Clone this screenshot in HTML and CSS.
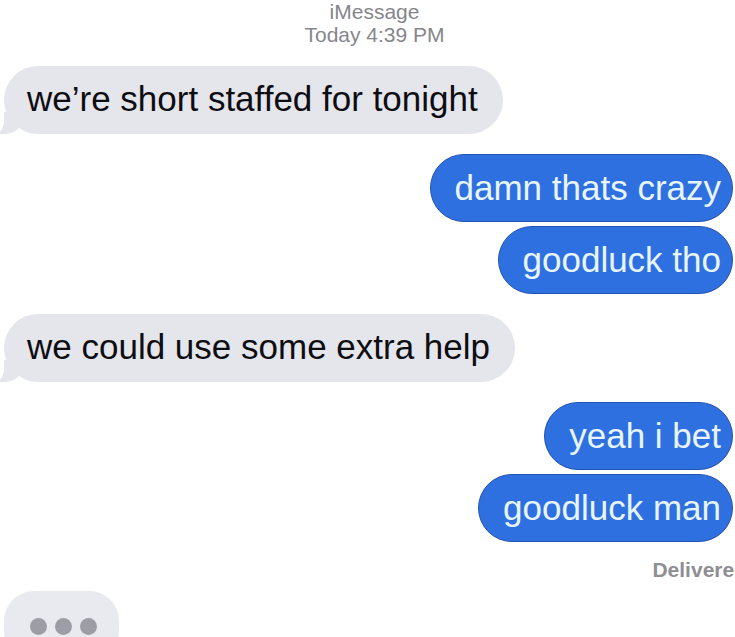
FILE: index.html
```html
<!DOCTYPE html>
<html>
<head>
<meta charset="utf-8">
<link rel="stylesheet" href="styles.css">
</head>
<body>
<div class="thread">
  <div class="header">
    <div class="service">iMessage</div>
    <div class="time">Today 4:39 PM</div>
  </div>
  <div class="row in first"><div class="bubble gray tail">we’re short staffed for tonight</div></div>
  <div class="row out group"><div class="bubble blue">damn thats crazy</div></div>
  <div class="row out tight"><div class="bubble blue">goodluck tho</div></div>
  <div class="row in group"><div class="bubble gray tail">we could use some extra help</div></div>
  <div class="row out group"><div class="bubble blue">yeah i bet</div></div>
  <div class="row out tight"><div class="bubble blue">goodluck man</div></div>
  <div class="delivered">Delivered</div>
  <div class="row in typing-row">
    <div class="typing"><span class="dot"></span><span class="dot"></span><span class="dot"></span></div>
  </div>
</div>
</body>
</html>
```
FILE: styles.css
```css
html, body {
  margin: 0;
  padding: 0;
  background: #ffffff;
}
body {
  width: 735px;
  height: 637px;
  overflow: hidden;
  font-family: "Liberation Sans", Arial, sans-serif;
}
.thread {
  display: flex;
  flex-direction: column;
}
.header {
  display: flex;
  flex-direction: column;
  align-items: center;
  color: #86868c;
  font-size: 21px;
  line-height: 23px;
  padding-left: 14px;
}
.row {
  display: flex;
}
.row.in { justify-content: flex-start; padding-left: 4px; }
.row.out { justify-content: flex-end; padding-right: 2px; }
.row.first { margin-top: 20px; }
.row.group { margin-top: 20px; }
.row.tight { margin-top: 4px; }
.bubble {
  height: 68px;
  line-height: 66px;
  font-size: 35px;
  border-radius: 34px;
  white-space: nowrap;
  box-sizing: border-box;
  position: relative;
}
.gray {
  background: #e5e5ec;
  color: #0e0e12;
  padding: 0 25px 0 23px;
}
.gray.tail::before {
  content: "";
  position: absolute;
  left: -4px;
  bottom: 0;
  width: 22px;
  height: 22px;
  background: #e5e5ec;
  border-bottom-right-radius: 18px 14px;
}
.gray.tail::after {
  content: "";
  position: absolute;
  left: -14px;
  bottom: -1px;
  width: 14px;
  height: 24px;
  background: #ffffff;
  border-bottom-right-radius: 12px 14px;
}
.blue {
  background: #2f70e0;
  border: 1.5px solid #2452b0;
  color: #e6f5ff;
  padding: 0 11px 0 24px;
}
.delivered {
  align-self: flex-end;
  margin-top: 16px;
  margin-right: -12px;
  font-size: 21px;
  font-weight: bold;
  color: #8e8e93;
  line-height: 24px;
}
.typing-row { margin-top: 9px; padding-left: 5px; }
.typing {
  width: 115px;
  height: 70px;
  border-radius: 30px;
  background: #e9e9f0;
  display: flex;
  gap: 8px;
  padding: 27px 0 0 26px;
  box-sizing: border-box;
}
.dot {
  width: 17px;
  height: 17px;
  border-radius: 50%;
  background: #9d9da5;
}
```
